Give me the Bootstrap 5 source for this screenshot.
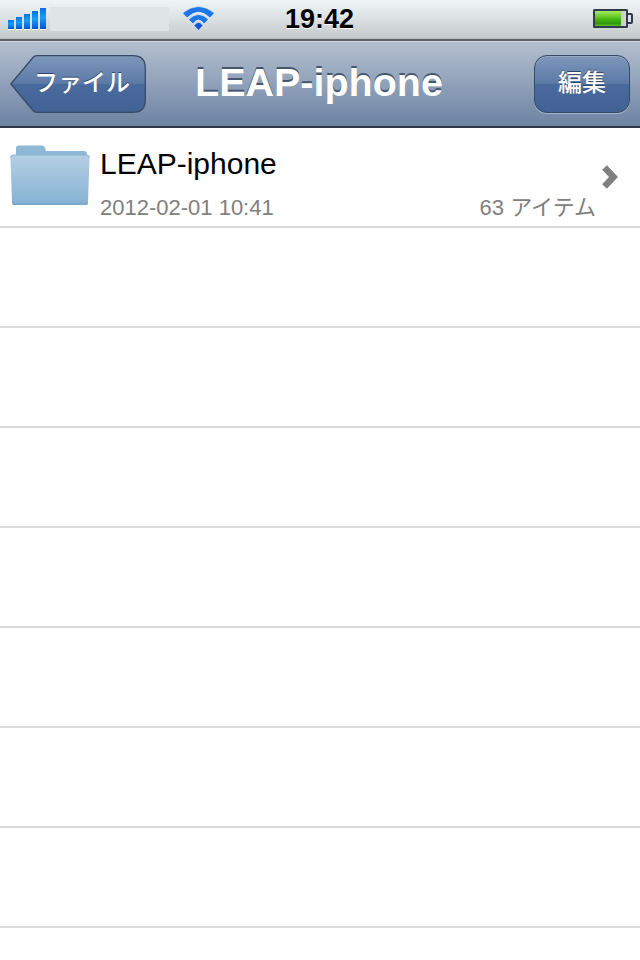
<!DOCTYPE html>
<html lang="ja">
<head>
    <meta charset="UTF-8">
    <meta name="viewport" content="width=device-width, initial-scale=1.0">
    <title>LEAP-iphone</title>
    <link href="https://cdn.jsdelivr.net/npm/bootstrap@5.3.0/dist/css/bootstrap.min.css" rel="stylesheet">
    <script src="https://cdn.jsdelivr.net/npm/bootstrap@5.3.0/dist/js/bootstrap.bundle.min.js"></script>
    <style>
        html, body { height: 960px; overflow: hidden; }
        body { font-family: "Liberation Sans", "Noto Sans CJK JP", sans-serif; background: #fff; }

        .status-bar { height: 41px; padding: 0 6px 2px 8px; background: linear-gradient(#f0f5f7, #c4cacb); border-bottom: 2px solid #5e6266; box-shadow: inset 0 -1px 0 #b5babb; }
        .status-left { flex: 1 1 0; }
        .status-right { flex: 1 1 0; margin-left: 3px; }
        .signal-bars { gap: 2px; height: 21px; margin-right: 4px; }
        .signal-bars i { display: block; width: 6px; background: linear-gradient(#0a6fe8, #12a0f8 45%, #0a4fd6); box-shadow: 0 1px 0 #fff; }
        .carrier-box { width: 119px; height: 24px; background: #dfe5e7; margin-right: 13px; }
        .clock { font-size: 27px; font-weight: 700; color: #000; line-height: 1; text-shadow: 0 1px 0 #fff; margin-top: 1px; }

        .nav-top { height: 87px; padding: 0 10px; background: linear-gradient(#b3bfcf, #6c83a3); border-top: 1px solid #ced6df; border-bottom: 2px solid #2d3745; }
        .back-btn, .edit-btn { color: #fff; font-size: 24px; font-weight: 500; text-shadow: 0 -1px 0 #2f4468; height: 58px; flex-shrink: 0; }
        .back-btn { width: 136px; position: relative; padding-left: 8px; }
        .back-btn svg { position: absolute; left: 0; top: 0; }
        .back-btn span { position: relative; margin-top: -3px; }
        .edit-btn { width: 96px; padding-bottom: 3px; border: 1px solid #374a66; border-radius: 13px; background: linear-gradient(#7e98ba 0, #5a79a6 50%, #4a6b9d 50%, #426195 100%); box-shadow: 0 1px 0 rgba(255,255,255,.35), inset 0 1px 0 rgba(255,255,255,.2); }
        .nav-name { color: #fff; font-size: 39.5px; font-weight: 700; line-height: 1; text-shadow: 0 -2px 0 #45566f; margin: -2px auto 0 49px; }

        .file-rows { height: 832px; overflow: hidden; }
        .file-rows .list-group-item { height: 100px; padding: 0; border-color: #dcdcdc; border-width: 0 0 2px; flex-shrink: 0; }
        .row-inner { height: 98px; padding: 0 0 0 10px; }
        .folder-icon { margin-bottom: 4px; }
        .row-text { width: 496px; margin-left: 10px; margin-right: 5px; }
        .row-name { font-size: 30px; line-height: 34px; color: #000; padding-top: 13px; }
        .row-meta { font-size: 22px; line-height: 26px; color: #808080; padding-top: 14px; }
    </style>
</head>
<body>
    <div class="status-bar d-flex align-items-center">
        <div class="status-left d-flex align-items-center">
            <div class="signal-bars d-flex align-items-end">
                <i style="height: 9px"></i><i style="height: 12px"></i><i style="height: 15px"></i><i style="height: 18px"></i><i style="height: 21px"></i>
            </div>
            <div class="carrier-box"></div>
            <svg width="33" height="25" viewBox="0 0 33 25" class="flex-shrink-0">
                <path d="M.5 7Q16.500-6 32.500 7L28 12Q16.500 .5 5 12Z" fill="#1f75ea" stroke="#fff" stroke-width=".6"/>
                <path d="M6.500 13.500Q16.500 3.500 26.500 13.500L22 18Q16.500 10 11 18Z" fill="#1f75ea" stroke="#fff" stroke-width=".6"/>
                <path d="M12 19.500Q16.500 13 21 19.500L16.500 24.500Z" fill="#0d58d8" stroke="#fff" stroke-width=".6"/>
            </svg>
        </div>
        <div class="clock">19:42</div>
        <div class="status-right d-flex justify-content-end">
            <svg width="42" height="22" viewBox="0 0 42 22">
                <defs>
                    <linearGradient id="battFill" x1="0" y1="0" x2="0" y2="1">
                        <stop offset="0" stop-color="#a8ec5e"/><stop offset=".55" stop-color="#48b812"/><stop offset=".85" stop-color="#2f9508"/><stop offset="1" stop-color="#66c82a"/>
                    </linearGradient>
                    <linearGradient id="battEnd" x1="0" y1="0" x2="1" y2="0">
                        <stop offset="0" stop-color="#7d8082"/><stop offset="1" stop-color="#d6d8d8"/>
                    </linearGradient>
                </defs>
                <rect x="1" y="1" width="35" height="19" rx="1.5" fill="#2f3a4d"/>
                <rect x="3" y="3" width="31" height="15" fill="url(#battEnd)"/>
                <rect x="3" y="3" width="26" height="15" fill="url(#battFill)"/>
                <path d="M36 6h3a1 1 0 0 1 1 1v7a1 1 0 0 1-1 1h-3" fill="none" stroke="#2f3a4d" stroke-width="2"/>
            </svg>
        </div>
    </div>

    <nav class="nav-top d-flex align-items-center">
        <div class="back-btn d-flex align-items-center justify-content-center">
            <svg width="136" height="58" viewBox="0 0 136 58">
                <defs>
                    <linearGradient id="backFill" x1="0" y1="0" x2="0" y2="1">
                        <stop offset="0" stop-color="#7e98ba"/><stop offset=".5" stop-color="#5a79a6"/><stop offset=".5" stop-color="#4a6b9d"/><stop offset="1" stop-color="#426195"/>
                    </linearGradient>
                </defs>
                <path d="M.8 29 23 2.500Q24.500 .7 27 .7H123Q135.300 .7 135.300 13V45Q135.300 57.300 123 57.300H27Q24.500 57.300 23 55.500Z" fill="url(#backFill)" stroke="#374a66" stroke-width="1.300"/>
            </svg>
            <span>ファイル</span>
        </div>
        <div class="nav-name">LEAP-iphone</div>
        <div class="edit-btn d-flex align-items-center justify-content-center">編集</div>
    </nav>

    <div class="list-group list-group-flush file-rows">
        <div class="list-group-item">
            <div class="row-inner d-flex align-items-center">
                <svg width="80" height="61" viewBox="0 0 80 61" class="flex-shrink-0 folder-icon">
                    <defs>
                        <linearGradient id="folderFront" x1="0" y1="0" x2="0" y2="1">
                            <stop offset="0" stop-color="#b4cfe2"/><stop offset="1" stop-color="#85b2d3"/>
                        </linearGradient>
                    </defs>
                    <path d="M6 10V3Q6 .5 9 .5H32Q34.500 .5 35 3L36 6H74Q77 6 77 9V14H6Z" fill="#8fb8d6"/>
                    <path d="M.5 13Q.5 10 3.500 10H76.500Q79.500 10 79.500 13L78 57.500Q78 60 75 60H5Q2 60 2 57.500Z" fill="url(#folderFront)"/>
                    <path d="M2 58Q2 60 5 60H75Q78 60 78 58Z" fill="#7ba8c9"/>
                    <path d="M.5 13Q.5 10 3.500 10H76.500Q79.500 10 79.500 13" fill="none" stroke="#8bb5d4" stroke-width="1"/>
                </svg>
                <div class="row-text flex-shrink-0">
                    <div class="row-name">LEAP-iphone</div>
                    <div class="row-meta d-flex justify-content-between"><span>2012-02-01 10:41</span><span>63 アイテム</span></div>
                </div>
                <svg width="19" height="26" viewBox="0 0 19 26" class="flex-shrink-0">
                    <path d="M3.500 3.500 12.500 13 3.500 22.500" fill="none" stroke="#808080" stroke-width="6.500"/>
                </svg>
            </div>
        </div>
        <div class="list-group-item"></div>
        <div class="list-group-item"></div>
        <div class="list-group-item"></div>
        <div class="list-group-item"></div>
        <div class="list-group-item"></div>
        <div class="list-group-item"></div>
        <div class="list-group-item"></div>
        <div class="list-group-item"></div>
    </div>
</body>
</html>
